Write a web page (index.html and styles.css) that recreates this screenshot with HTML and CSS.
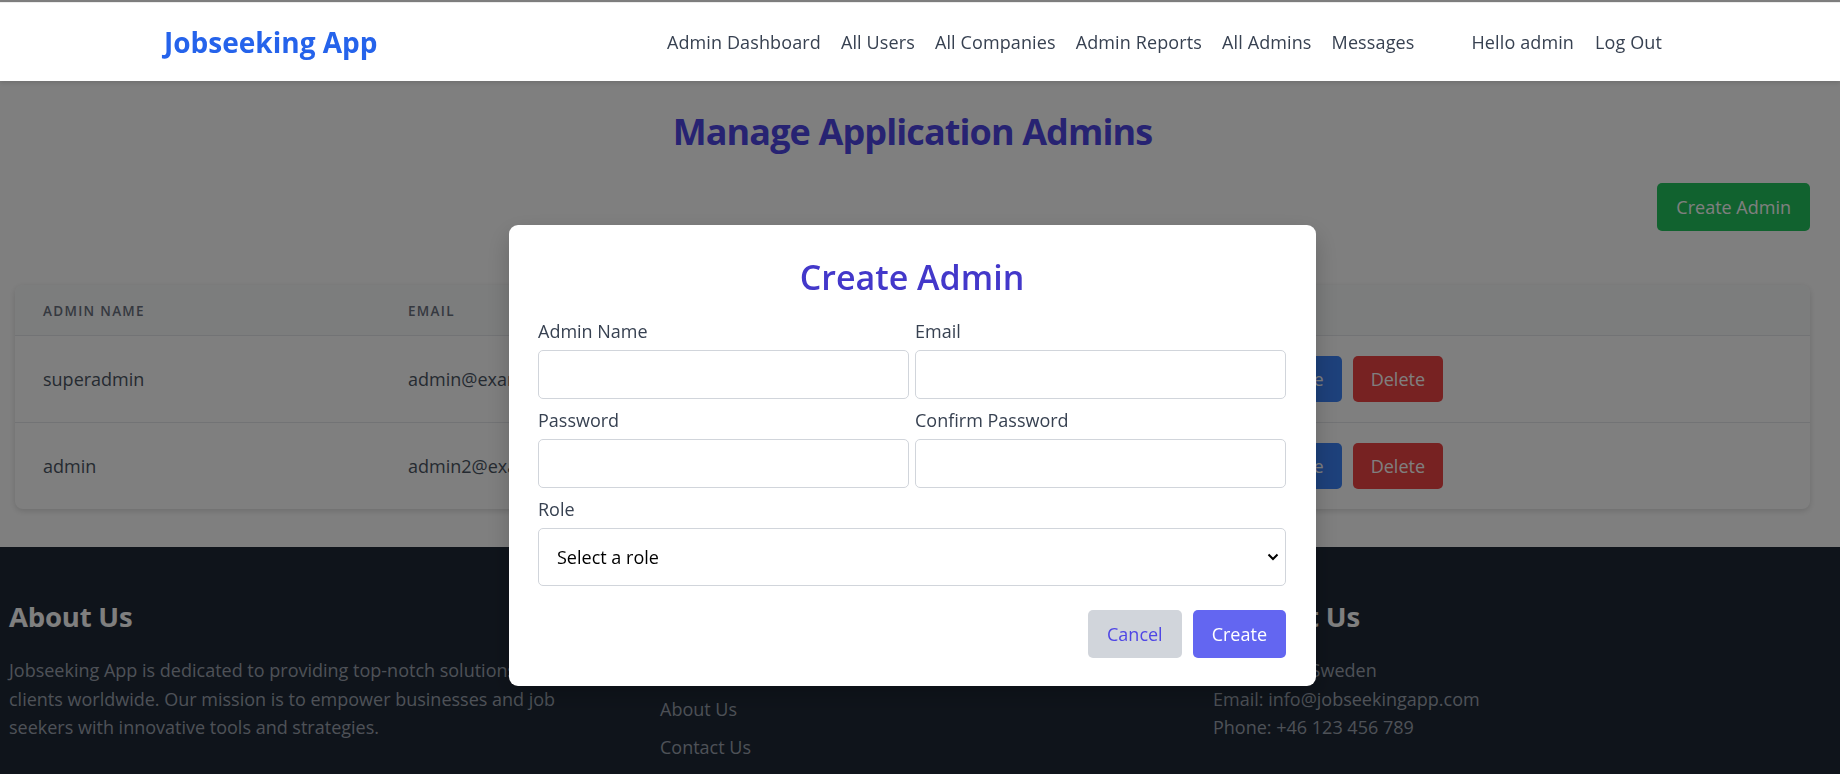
FILE: index.html
```html
<!DOCTYPE html>
<html lang="en">
<head>
<meta charset="utf-8">
<title>Manage Application Admins</title>
<link rel="stylesheet" href="styles.css">
</head>
<body>
<header class="navbar">
  <div class="nav-inner">
    <a class="logo" href="#">Jobseeking App</a>
    <nav class="nav">
      <ul class="nav-links">
        <li><a href="#">Admin Dashboard</a></li>
        <li><a href="#">All Users</a></li>
        <li><a href="#">All Companies</a></li>
        <li><a href="#">Admin Reports</a></li>
        <li><a href="#">All Admins</a></li>
        <li><a href="#">Messages</a></li>
      </ul>
      <div class="nav-user">
        <span>Hello admin</span>
        <a href="#">Log Out</a>
      </div>
    </nav>
  </div>
</header>

<main class="main">
  <div class="main-inner">
    <h1 class="page-title">Manage Application Admins</h1>
    <div class="toolbar">
      <button class="btn btn-green">Create Admin</button>
    </div>
    <div class="card">
      <table class="admins">
        <colgroup>
          <col class="c1"><col class="c2"><col class="c3"><col class="c4">
        </colgroup>
        <thead>
          <tr><th>Admin Name</th><th>Email</th><th>Role</th><th>Actions</th></tr>
        </thead>
        <tbody>
          <tr>
            <td>superadmin</td>
            <td>admin@example.com</td>
            <td>Super Admin</td>
            <td><div class="row-actions"><button class="btn btn-blue">Update</button><button class="btn btn-red">Delete</button></div></td>
          </tr>
          <tr>
            <td>admin</td>
            <td>admin2@example.com</td>
            <td>Admin</td>
            <td><div class="row-actions"><button class="btn btn-blue">Update</button><button class="btn btn-red">Delete</button></div></td>
          </tr>
        </tbody>
      </table>
    </div>
  </div>
</main>

<footer class="footer">
  <div class="footer-inner">
    <div class="fcol">
      <h3>About Us</h3>
      <p class="about">Jobseeking App is dedicated to providing top-notch solutions to our clients worldwide. Our mission is to empower businesses and job seekers with innovative tools and strategies.</p>
    </div>
    <div class="fcol">
      <h3>Quick Links</h3>
      <ul class="flinks">
        <li><a href="#">Home</a></li>
        <li><a href="#">About Us</a></li>
        <li><a href="#">Contact Us</a></li>
      </ul>
    </div>
    <div class="fcol">
      <h3>Contact Us</h3>
      <p class="contact">Stockholm, Sweden</p>
      <p class="contact">Email: info@jobseekingapp.com</p>
      <p class="contact">Phone: +46 123 456 789</p>
    </div>
  </div>
</footer>

<div class="overlay">
  <div class="modal">
    <h2 class="modal-title">Create Admin</h2>
    <form class="form">
      <div class="field">
        <label>Admin Name</label>
        <input type="text">
      </div>
      <div class="field">
        <label>Email</label>
        <input type="email">
      </div>
      <div class="field">
        <label>Password</label>
        <input type="password">
      </div>
      <div class="field">
        <label>Confirm Password</label>
        <input type="password">
      </div>
      <div class="field wide">
        <label>Role</label>
        <select>
          <option>Select a role</option>
          <option>Admin</option>
          <option>Super Admin</option>
        </select>
      </div>
      <div class="modal-actions wide">
        <button type="button" class="btn btn-cancel">Cancel</button>
        <button type="button" class="btn btn-create">Create</button>
      </div>
    </form>
  </div>
</div>
</body>
</html>
```

FILE: styles.css
```css
* { box-sizing: border-box; }

html, body {
  margin: 0;
  padding: 0;
  background: #ffffff;
  font-family: "Open Sans", "Noto Sans", sans-serif;
  color: #374151;
}

a { text-decoration: none; color: inherit; }
ul { list-style: none; margin: 0; padding: 0; }

/* ---------- navbar ---------- */
.navbar {
  position: relative;
  z-index: 60;
  margin-top: 2px;
  border-top: 1px solid #ececec;
  background: #ffffff;
  height: 79px;
  box-shadow: 0 2px 4px rgba(0, 0, 0, 0.12);
}

.nav-inner {
  width: 1536px;
  margin-left: 144px;
  height: 100%;
  padding: 0 18px 0 20px;
  display: flex;
  align-items: center;
  justify-content: space-between;
}

.logo {
  font-size: 28px;
  font-weight: 700;
  color: #2563eb;
}

.nav {
  display: flex;
  align-items: center;
  font-size: 18px;
  letter-spacing: 0.12px;
  color: #374151;
}

.nav-links {
  display: flex;
  gap: 20px;
}

.nav-user {
  display: flex;
  gap: 21px;
  margin-left: 57px;
}

/* ---------- main ---------- */
.main {
  background: #ffffff;
}

.main-inner {
  width: 1825px;
  padding: 31px 15px 38px;
}

.page-title {
  margin: 0;
  text-align: center;
  font-size: 36px;
  line-height: 40px;
  font-weight: 700;
  letter-spacing: -0.9px;
  color: #4f46e5;
}

.toolbar {
  display: flex;
  justify-content: flex-end;
  margin-top: 31px;
}

.btn {
  font-family: inherit;
  font-size: 18px;
  border: 0;
  border-radius: 5px;
  cursor: pointer;
  color: #ffffff;
  padding: 0 18px;
}

.btn-green {
  background: #22c55e;
  height: 48px;
  padding: 0 19px;
}

.card {
  margin-top: 54px;
  background: #ffffff;
  border-radius: 8px;
  box-shadow: 0 2px 6px rgba(0, 0, 0, 0.15);
  overflow: hidden;
}

.admins {
  width: 100%;
  border-collapse: collapse;
  table-layout: fixed;
}

.c1 { width: 365px; }
.c2 { width: 432px; }
.c3 { width: 404px; }

.admins th {
  background: #f9fafb;
  height: 50px;
  padding: 3px 28px 0;
  text-align: left;
  font-size: 13.5px;
  font-weight: 600;
  letter-spacing: 1.3px;
  text-transform: uppercase;
  color: #6b7280;
  border-bottom: 1px solid #e5e7eb;
}

.admins td {
  height: 87px;
  padding: 0 28px;
  font-size: 18px;
  color: #4b5563;
  border-bottom: 1px solid #e5e7eb;
}

.admins tbody tr:last-child td { border-bottom: 0; }

.row-actions {
  display: flex;
  gap: 11px;
}

.btn-blue { background: #3b82f6; height: 46px; }
.btn-red { background: #ef4444; height: 46px; }

/* ---------- footer ---------- */
.footer {
  background: #1f2937;
  color: #9ca3af;
}

.footer-inner {
  width: 1825px;
  padding: 52px 8px 40px 9px;
  display: grid;
  grid-template-columns: 651px 553px 1fr;
}

.footer h3 {
  margin: 0 0 21px;
  font-size: 27.5px;
  line-height: 36px;
  font-weight: 700;
  color: #ffffff;
  letter-spacing: -0.2px;
}

.about {
  margin: 0;
  max-width: 600px;
  font-size: 18px;
  line-height: 28.5px;
}

.flinks li {
  font-size: 18px;
  line-height: 28.5px;
  margin-bottom: 10px;
}

.contact {
  margin: 0;
  font-size: 18px;
  line-height: 28.5px;
}

/* ---------- modal ---------- */
.overlay {
  position: fixed;
  inset: 0;
  z-index: 50;
  background: rgba(0, 0, 0, 0.5);
  display: flex;
  justify-content: center;
  align-items: flex-start;
  padding: 225px 15px 0 0;
}

.modal {
  width: 807px;
  background: #ffffff;
  border-radius: 9px;
  padding: 32px 30px 28px 29px;
  box-shadow: 0 10px 25px rgba(0, 0, 0, 0.2);
}

.modal-title {
  margin: 0 0 21px;
  text-align: center;
  font-size: 34px;
  line-height: 40px;
  font-weight: 600;
  color: #4338ca;
}

.form {
  display: grid;
  grid-template-columns: 1fr 1fr;
  column-gap: 6px;
  row-gap: 8px;
}

.wide { grid-column: 1 / -1; }

.field label {
  display: block;
  font-size: 18px;
  line-height: 27px;
  color: #374151;
  margin-bottom: 5px;
}

.field input {
  display: block;
  width: 100%;
  height: 49px;
  border: 1px solid #d1d5db;
  border-radius: 5px;
  font-family: inherit;
  font-size: 18px;
  padding: 0 12px;
  background: #ffffff;
}

.field select {
  display: block;
  width: 100%;
  height: 58px;
  border: 1px solid #d1d5db;
  border-radius: 5px;
  font-family: inherit;
  font-size: 18px;
  color: #000000;
  padding: 0 40px 0 18px;
  background: #ffffff url("data:image/svg+xml,%3Csvg xmlns='http://www.w3.org/2000/svg' width='12' height='8' viewBox='0 0 12 8'%3E%3Cpath d='M1.5 1.5 L6 6 L10.5 1.5' fill='none' stroke='%23000' stroke-width='2'/%3E%3C/svg%3E") no-repeat right 6px center;
  background-size: 12px 8px;
  appearance: none;
  -webkit-appearance: none;
}

.modal-actions {
  display: flex;
  justify-content: flex-end;
  gap: 11px;
  margin-top: 16px;
}

.btn-cancel {
  background: #d1d5db;
  color: #4f46e5;
  height: 48px;
  padding: 0 19px;
}

.btn-create {
  background: #6366f1;
  color: #ffffff;
  height: 48px;
  padding: 0 19px;
}
```
